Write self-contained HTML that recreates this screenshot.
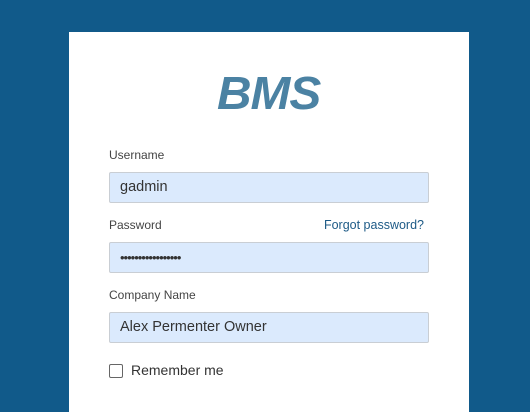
<!DOCTYPE html>
<html><head><style>
body{margin:0;width:530px;height:406px;background:#115a8a;overflow:hidden;font-family:"Liberation Sans",sans-serif;position:relative}
.card{position:absolute;left:69px;top:32px;width:400px;height:380px;background:#fff}
.logo{position:absolute;left:217px;top:66px;font-size:46px;font-weight:bold;font-style:italic;color:#4b82a3;letter-spacing:-1px;transform:scaleX(1.04);transform-origin:left}
.lbl{position:absolute;left:109px;font-size:12px;color:#444}
.in{position:absolute;left:109px;height:29px;background:#dbeafd;border:1px solid #c9ced4;border-radius:2px;font-size:14.5px;color:#333;line-height:29px;padding-left:10px;width:308px}
.fp{position:absolute;right:106px;top:218px;font-size:12.5px;color:#1d5a86}
.cb{position:absolute;left:109px;top:364px;width:12px;height:12px;border:1px solid #666;border-radius:2px}
.rm{position:absolute;left:131px;top:362px;font-size:14px;color:#333}
</style></head><body>
<div class="card"></div>
<div class="logo">BMS</div>
<div class="lbl" style="top:148px">Username</div>
<div class="in" style="top:172px">gadmin</div>
<div class="lbl" style="top:218px">Password</div>
<div class="fp">Forgot password?</div>
<div class="in" style="top:242px;font-size:13px;letter-spacing:-1px">•••••••••••••••••</div>
<div class="lbl" style="top:288px">Company Name</div>
<div class="in" style="top:312px">Alex Permenter Owner</div>
<div class="cb"></div>
<div class="rm">Remember me</div>
</body></html>
